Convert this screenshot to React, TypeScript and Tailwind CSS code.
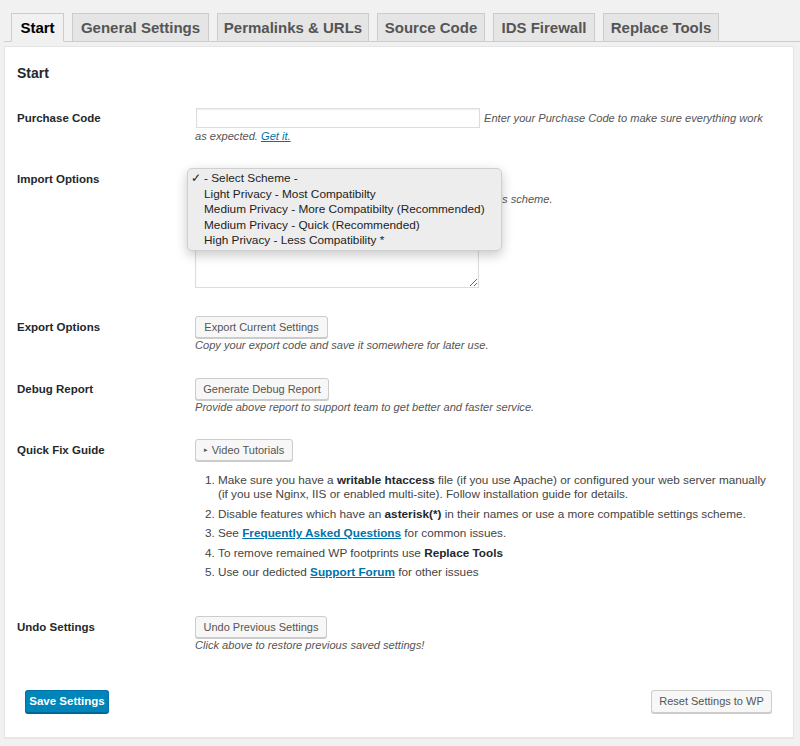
import React from "react";

const font = { fontFamily: '"Liberation Sans", Arial, sans-serif' };

function Tab({ label, w, active }: { label: string; w: string; active?: boolean }) {
  return (
    <div
      className={
        "h-[29px] flex items-center justify-center border border-[#ccc] text-[15px] font-bold leading-none -mb-px " +
        w +
        (active ? " bg-[#f1f1f1] text-[#000] border-b-[#f1f1f1]" : " bg-[#e5e5e5] text-[#555]")
      }
    >
      {label}
    </div>
  );
}

function WpButton({ children, w }: { children: React.ReactNode; w: string }) {
  return (
    <div
      className={
        "h-[22px] flex items-center justify-center rounded-[3px] border border-[#ccc] bg-[#f7f7f7] text-[11px] text-[#555] shadow-[0_1px_0_#ccc] " +
        w
      }
    >
      {children}
    </div>
  );
}

function Label({ children, lh }: { children: React.ReactNode; lh: string }) {
  return (
    <div className={"w-[178px] shrink-0 text-[11.5px] font-bold text-[#23282d] " + lh}>{children}</div>
  );
}

export default function App() {
  return (
    <div className="min-h-[746px] bg-[#f1f1f1] pl-[4px]" style={font}>
      {/* Tabs */}
      <div className="flex gap-[8px] border-b border-[#ccc] pl-[7px] pt-[13px]">
        <Tab label="Start" w="w-[53px]" active />
        <Tab label="General Settings" w="w-[137px]" />
        <Tab label="Permalinks & URLs" w="w-[152px]" />
        <Tab label="Source Code" w="w-[108px]" />
        <Tab label="IDS Firewall" w="w-[102px]" />
        <Tab label="Replace Tools" w="w-[116px]" />
      </div>

      {/* Panel */}
      <div className="mt-[4px] mr-[6px] border border-[#e5e5e5] bg-white px-[12px] pt-[17px] pb-[24px] shadow-[0_1px_1px_rgba(0,0,0,0.04)]">
        <div className="text-[14px] font-bold leading-[18px] text-[#23282d]">Start</div>

        {/* Purchase Code */}
        <div className="mt-[26px] flex">
          <Label lh="leading-[20px]">Purchase Code</Label>
          <div className="text-[11.1px] italic text-[#555]">
            <div className="flex h-[20px] items-center">
              <input
                className="ml-[1px] h-[20px] w-[284px] border border-[#ddd] bg-white shadow-[inset_0_1px_2px_rgba(0,0,0,0.07)] outline-none"
                type="text"
              />
              <span className="ml-[4px]">Enter your Purchase Code to make sure everything work</span>
            </div>
            <div className="leading-[16px]">
              as expected. <span className="text-[#0073aa] underline">Get it.</span>
            </div>
          </div>
        </div>

        {/* Import Options */}
        <div className="mt-[26px] flex">
          <Label lh="leading-[18px]">Import Options</Label>
          <div className="relative">
            <div className="h-[20px] w-[300px] rounded-[3px] border border-[#ddd] bg-white shadow-[0_0_0_2px_#a9cbe0]" />
            <div className="ml-[3px] mt-[1px] text-[11.1px] italic leading-[16px] text-[#555]">
              Select a scheme or paste your export code below to import this scheme.
            </div>
            <textarea className="mt-[4px] block h-[77px] w-[284px] resize border border-[#ddd] bg-white shadow-[inset_0_1px_2px_rgba(0,0,0,0.07)] outline-none" />

            {/* open dropdown */}
            <div className="absolute left-[-8px] top-[-2px] h-[83px] w-[315px] rounded-[5px] border border-[#cfcfcf] bg-[#ededed] py-[2px] text-[11.8px] leading-[15.5px] text-[#222] shadow-[0_4px_12px_rgba(0,0,0,0.22)]">
              <div className="flex">
                <span className="w-[16px] pl-[3px] text-[12px]">✓</span>
                <span>- Select Scheme -</span>
              </div>
              <div className="pl-[16px]">Light Privacy - Most Compatibilty</div>
              <div className="pl-[16px]">Medium Privacy - More Compatibilty (Recommended)</div>
              <div className="pl-[16px]">Medium Privacy - Quick (Recommended)</div>
              <div className="pl-[16px]">High Privacy - Less Compatibility *</div>
            </div>
          </div>
        </div>

        {/* Export Options */}
        <div className="mt-[28px] flex">
          <Label lh="leading-[22px]">Export Options</Label>
          <div>
            <WpButton w="w-[133px]">Export Current Settings</WpButton>
            <div className="text-[11.1px] italic leading-[15px] text-[#555]">
              Copy your export code and save it somewhere for later use.
            </div>
          </div>
        </div>

        {/* Debug Report */}
        <div className="mt-[25px] flex">
          <Label lh="leading-[22px]">Debug Report</Label>
          <div>
            <WpButton w="w-[134px]">Generate Debug Report</WpButton>
            <div className="text-[11.1px] italic leading-[15px] text-[#555]">
              Provide above report to support team to get better and faster service.
            </div>
          </div>
        </div>

        {/* Quick Fix Guide */}
        <div className="mt-[24px] flex">
          <Label lh="leading-[22px]">Quick Fix Guide</Label>
          <div>
            <WpButton w="w-[98px]">
              <span className="mr-[4px] text-[7px]">▸</span>Video Tutorials
            </WpButton>
            <ol className="mt-[12px] flex list-decimal flex-col gap-[5.5px] pl-[23px] text-[11.75px] leading-[14px] text-[#444]">
              <li>
                Make sure you have a <b className="font-bold text-[#23282d]">writable htaccess</b> file (if you use
                Apache) or configured your web server manually
                <br />
                (if you use Nginx, IIS or enabled multi-site). Follow installation guide for details.
              </li>
              <li>
                Disable features which have an <b className="font-bold text-[#23282d]">asterisk(*)</b> in their names or
                use a more compatible settings scheme.
              </li>
              <li>
                See{" "}
                <span className="font-bold text-[#0073aa] underline">Frequently Asked Questions</span> for common
                issues.
              </li>
              <li>
                To remove remained WP footprints use <b className="font-bold text-[#23282d]">Replace Tools</b>
              </li>
              <li>
                Use our dedicted <span className="font-bold text-[#0073aa] underline">Support Forum</span> for other
                issues
              </li>
            </ol>
          </div>
        </div>

        {/* Undo Settings */}
        <div className="mt-[37px] flex">
          <Label lh="leading-[22px]">Undo Settings</Label>
          <div>
            <WpButton w="w-[132px]">Undo Previous Settings</WpButton>
            <div className="text-[11.1px] italic leading-[15px] text-[#555]">
              Click above to restore previous saved settings!
            </div>
          </div>
        </div>

        {/* Footer */}
        <div className="mt-[37px] flex items-center justify-between pl-[8px] pr-[9px]">
          <div className="flex h-[23px] w-[84px] items-center justify-center rounded-[3px] border border-[#0073aa] border-b-[#006799] bg-[#0085ba] text-[11.5px] font-bold text-white shadow-[0_1px_0_#006799]">
            Save Settings
          </div>
          <div className="flex h-[23px] w-[121px] items-center justify-center rounded-[3px] border border-[#ccc] bg-[#f7f7f7] text-[11px] text-[#555] shadow-[0_1px_0_#ccc]">
            Reset Settings to WP
          </div>
        </div>
      </div>
    </div>
  );
}
